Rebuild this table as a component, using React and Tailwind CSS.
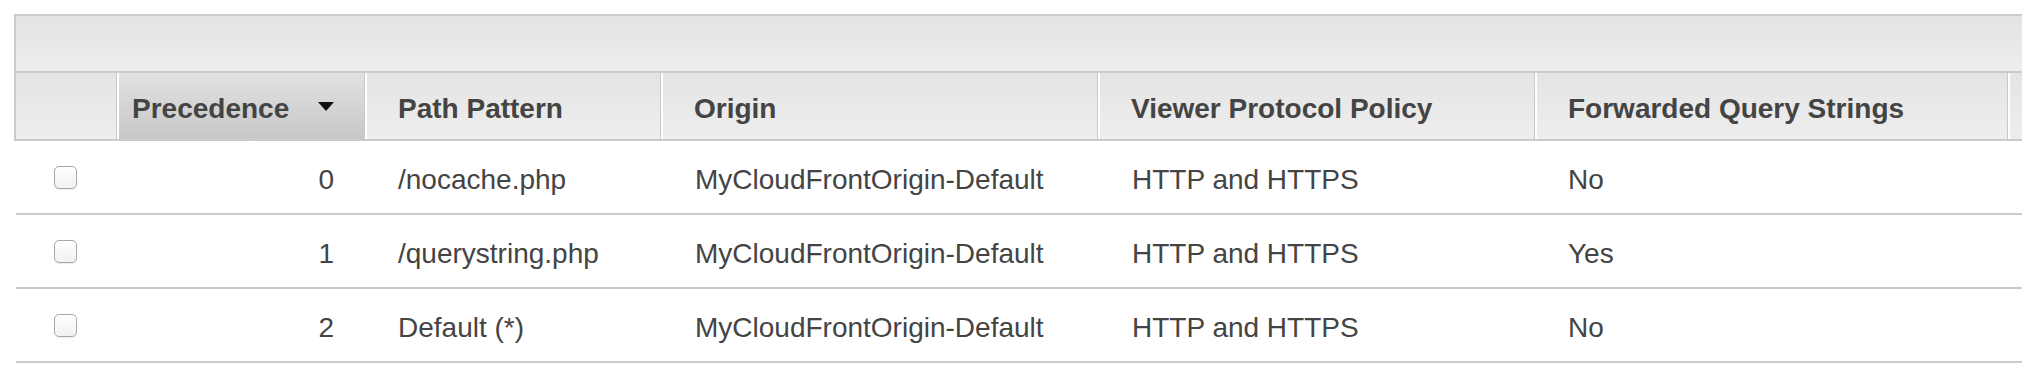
import React from "react";

const columns = [
  { key: "precedence", label: "Precedence", width: "w-[248px]", sorted: true },
  { key: "path", label: "Path Pattern", width: "w-[296px]" },
  { key: "origin", label: "Origin", width: "w-[437px]" },
  { key: "viewer", label: "Viewer Protocol Policy", width: "w-[437px]" },
  { key: "query", label: "Forwarded Query Strings", width: "w-[473px]" },
];

const behaviors = [
  { precedence: 0, path: "/nocache.php", origin: "MyCloudFrontOrigin-Default", viewer: "HTTP and HTTPS", query: "No" },
  { precedence: 1, path: "/querystring.php", origin: "MyCloudFrontOrigin-Default", viewer: "HTTP and HTTPS", query: "Yes" },
  { precedence: 2, path: "Default (*)", origin: "MyCloudFrontOrigin-Default", viewer: "HTTP and HTTPS", query: "No" },
];

// Little sort indicator next to the active column
function SortArrow() {
  return (
    <svg width="16" height="9" viewBox="0 0 16 9" className="shrink-0">
      <path d="M0 0 L16 0 L8 9 Z" fill="#111" />
    </svg>
  );
}

function Checkbox() {
  return (
    <div className="w-[23px] h-[23px] rounded-[5px] border border-[#a8a8a8] bg-gradient-to-b from-white to-[#f1f1f1] shadow-[0_1px_1px_rgba(0,0,0,0.08)]" />
  );
}

function HeaderCell({ col }) {
  if (col.sorted) {
    return (
      <div
        className={`${col.width} shrink-0 h-full flex items-center justify-between pl-[15px] pr-[30px] border-l border-[#c8c8c8] shadow-[inset_2px_0_0_#fff] bg-gradient-to-b from-[#e2e2e2] to-[#c7c7c7]`}
      >
        <span className="font-bold pt-[5px]">{col.label}</span>
        <SortArrow />
      </div>
    );
  }
  return (
    <div
      className={`${col.width} shrink-0 h-full flex items-center pl-[33px] border-l border-[#c8c8c8] shadow-[inset_2px_0_0_#fff]`}
    >
      <span className="font-bold pt-[5px]">{col.label}</span>
    </div>
  );
}

export default function App() {
  return (
    <div
      className="w-[2022px] h-[388px] overflow-hidden bg-white text-[#444] text-[28px] leading-none"
      style={{ fontFamily: '"Liberation Sans", Arial, sans-serif' }}
    >
      <div className="ml-[14px] mt-[14px] w-[2300px]">
        {/* Table header block */}
        <div className="border-l-2 border-t-2 border-[#cbcbcb]">
          {/* Toolbar strip */}
          <div className="h-[57px] bg-gradient-to-b from-[#e3e3e3] to-[#eeeeee] border-b-2 border-[#cbcbcb]" />
          {/* Column headers */}
          <div className="h-[68px] flex bg-gradient-to-b from-[#e4e4e4] to-[#eeeeee] border-b-2 border-[#cbcbcb]">
            <div className="w-[100px] shrink-0 h-full" />
            {columns.map((col) => (
              <HeaderCell key={col.key} col={col} />
            ))}
            <div className="flex-1 h-full border-l border-[#c8c8c8] shadow-[inset_2px_0_0_#fff]" />
          </div>
        </div>

        {/* Rows */}
        <div className="ml-[2px]">
          {behaviors.map((row) => (
            <div key={row.precedence} className="h-[74px] flex items-center border-b-2 border-[#cbcbcb]">
              <div className="w-[100px] shrink-0 pl-[38px]">
                <Checkbox />
              </div>
              <div className="w-[248px] shrink-0 pt-[5px] text-right pr-[30px]">{row.precedence}</div>
              <div className="w-[296px] shrink-0 pt-[5px] pl-[34px]">{row.path}</div>
              <div className="w-[437px] shrink-0 pt-[5px] pl-[35px]">{row.origin}</div>
              <div className="w-[437px] shrink-0 pt-[5px] pl-[35px]">{row.viewer}</div>
              <div className="w-[473px] shrink-0 pt-[5px] pl-[34px]">{row.query}</div>
              <div className="flex-1" />
            </div>
          ))}
        </div>
      </div>
    </div>
  );
}
